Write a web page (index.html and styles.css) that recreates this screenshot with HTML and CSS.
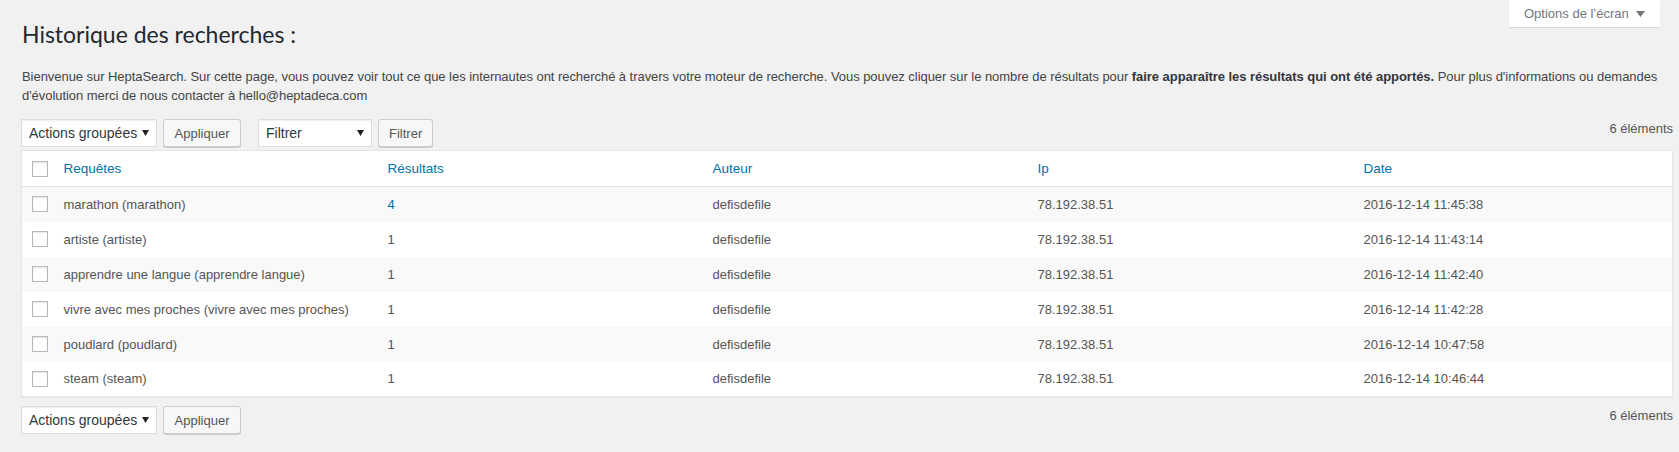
FILE: index.html
```html
<!DOCTYPE html>
<html lang="fr">
<head>
<meta charset="utf-8">
<title>Historique des recherches</title>
<link rel="stylesheet" href="styles.css">
</head>
<body>
<div class="page">
  <div class="top">
    <h1 class="title">Historique des recherches :</h1>
    <div class="screen-options">
      <span>Options de l’écran</span>
      <svg class="caret" width="9" height="6" viewBox="0 0 9 6"><path d="M0 0h9L4.5 6z" fill="#72777c"/></svg>
    </div>
  </div>
  <p class="intro">Bienvenue sur HeptaSearch. Sur cette page, vous pouvez voir tout ce que les internautes ont recherché à travers votre moteur de recherche. Vous pouvez cliquer sur le nombre de résultats pour <strong>faire apparaître les résultats qui ont été apportés.</strong> Pour plus d'informations ou demandes d'évolution merci de nous contacter à hello@heptadeca.com</p>

  <div class="tablenav tablenav-top">
    <div class="actions">
      <div class="select select-bulk"><span>Actions groupées</span><svg width="7" height="6" viewBox="0 0 7 6"><path d="M0 0h7L3.5 6z" fill="#222"/></svg></div>
      <button class="button button-apply">Appliquer</button>
      <div class="select select-filter"><span>Filtrer</span><svg width="7" height="6" viewBox="0 0 7 6"><path d="M0 0h7L3.5 6z" fill="#222"/></svg></div>
      <button class="button button-filter">Filtrer</button>
    </div>
    <div class="count">6 éléments</div>
  </div>

  <table class="list">
    <colgroup>
      <col class="c-check"><col class="c-req"><col class="c-res"><col class="c-aut"><col class="c-ip"><col class="c-date">
    </colgroup>
    <thead>
      <tr>
        <th class="check"><span class="cb"></span></th>
        <th><a>Requêtes</a></th>
        <th><a>Résultats</a></th>
        <th><a>Auteur</a></th>
        <th><a>Ip</a></th>
        <th><a>Date</a></th>
      </tr>
    </thead>
    <tbody>
      <tr class="alt"><td class="check"><span class="cb"></span></td><td>marathon (marathon)</td><td><a class="num">4</a></td><td>defisdefile</td><td>78.192.38.51</td><td>2016-12-14 11:45:38</td></tr>
      <tr><td class="check"><span class="cb"></span></td><td>artiste (artiste)</td><td>1</td><td>defisdefile</td><td>78.192.38.51</td><td>2016-12-14 11:43:14</td></tr>
      <tr class="alt"><td class="check"><span class="cb"></span></td><td>apprendre une langue (apprendre langue)</td><td>1</td><td>defisdefile</td><td>78.192.38.51</td><td>2016-12-14 11:42:40</td></tr>
      <tr><td class="check"><span class="cb"></span></td><td>vivre avec mes proches (vivre avec mes proches)</td><td>1</td><td>defisdefile</td><td>78.192.38.51</td><td>2016-12-14 11:42:28</td></tr>
      <tr class="alt"><td class="check"><span class="cb"></span></td><td>poudlard (poudlard)</td><td>1</td><td>defisdefile</td><td>78.192.38.51</td><td>2016-12-14 10:47:58</td></tr>
      <tr><td class="check"><span class="cb"></span></td><td>steam (steam)</td><td>1</td><td>defisdefile</td><td>78.192.38.51</td><td>2016-12-14 10:46:44</td></tr>
    </tbody>
  </table>

  <div class="tablenav tablenav-bottom">
    <div class="actions">
      <div class="select select-bulk"><span>Actions groupées</span><svg width="7" height="6" viewBox="0 0 7 6"><path d="M0 0h7L3.5 6z" fill="#222"/></svg></div>
      <button class="button button-apply">Appliquer</button>
    </div>
    <div class="count">6 éléments</div>
  </div>
</div>
</body>
</html>
```
FILE: styles.css
```css
* { box-sizing: border-box; }
html, body { margin: 0; padding: 0; }
body {
  background: #f1f1f1;
  color: #444;
  font-family: "Liberation Sans", Arial, sans-serif;
  font-size: 13px;
  height: 452px;
  overflow: hidden;
}
.page {
  padding: 0 6px 0 21px;
}
.top {
  display: flex;
  justify-content: space-between;
  align-items: flex-start;
}
.title {
  margin: 0;
  padding: 20px 0 0 1px;
  font-family: Lato, "Liberation Sans", sans-serif;
  font-weight: 400;
  font-size: 23px;
  line-height: 29px;
  color: #23282d;
}
.screen-options {
  width: 151px;
  height: 27px;
  margin-right: 13px;
  background: #fff;
  box-shadow: 0 1px 1px rgba(0,0,0,.1);
  display: flex;
  align-items: center;
  padding-left: 15px;
  gap: 7px;
  color: #72777c;
}
.intro {
  margin: 19px 0 0 1px;
  line-height: 18.5px;
  letter-spacing: -0.05px;
  color: #444;
}
.intro strong { font-weight: 700; color: #32373c; }

.tablenav {
  display: flex;
  justify-content: space-between;
  align-items: flex-start;
}
.tablenav-top { margin-top: 14px; height: 31px; }
.tablenav-bottom { margin-top: 9px; }
.actions { display: flex; align-items: center; }
.select {
  height: 28px;
  background: #fff;
  border: 1px solid #ddd;
  box-shadow: inset 0 1px 2px rgba(0,0,0,.07);
  display: flex;
  align-items: center;
  justify-content: space-between;
  padding: 0 7px 0 7px;
  color: #32373c;
  font-size: 14px;
}
.select-bulk { width: 136px; }
.select-filter { width: 114px; margin-left: 17px; }
.button {
  height: 28px;
  margin-left: 6px;
  padding: 0 10px;
  background: #f7f7f7;
  border: 1px solid #ccc;
  border-radius: 3px;
  box-shadow: 0 1px 0 #ccc;
  color: #555;
  font-family: inherit;
  font-size: 13px;
}
.button-apply { width: 78px; }
.button-filter { width: 55px; }
.count {
  padding-top: 1px;
  line-height: 18px;
  color: #555;
}

.list {
  width: 100%;
  border-collapse: collapse;
  table-layout: fixed;
  background: #fff;
  border: 1px solid #e5e5e5;
  box-shadow: 0 1px 1px rgba(0,0,0,.04);
}
.c-check { width: 32px; }
.c-req { width: 324px; }
.c-res { width: 325px; }
.c-aut { width: 325px; }
.c-ip { width: 326px; }
th, td {
  text-align: left;
  font-weight: 400;
  padding: 0 10px;
  vertical-align: middle;
  white-space: nowrap;
}
thead th {
  height: 36px;
  border-bottom: 1px solid #e1e1e1;
  font-size: 13.5px;
}
thead a { color: #0073aa; }
tbody td {
  height: 35px;
  color: #555;
}
tbody tr.alt { background: #f9f9f9; }
.num { color: #0073aa; }
.check { padding: 0 0 0 10px; }
.cb {
  display: block;
  width: 16px;
  height: 16px;
  background: #fff;
  border: 1px solid #b4b9be;
  box-shadow: inset 0 1px 2px rgba(0,0,0,.1);
}
```
